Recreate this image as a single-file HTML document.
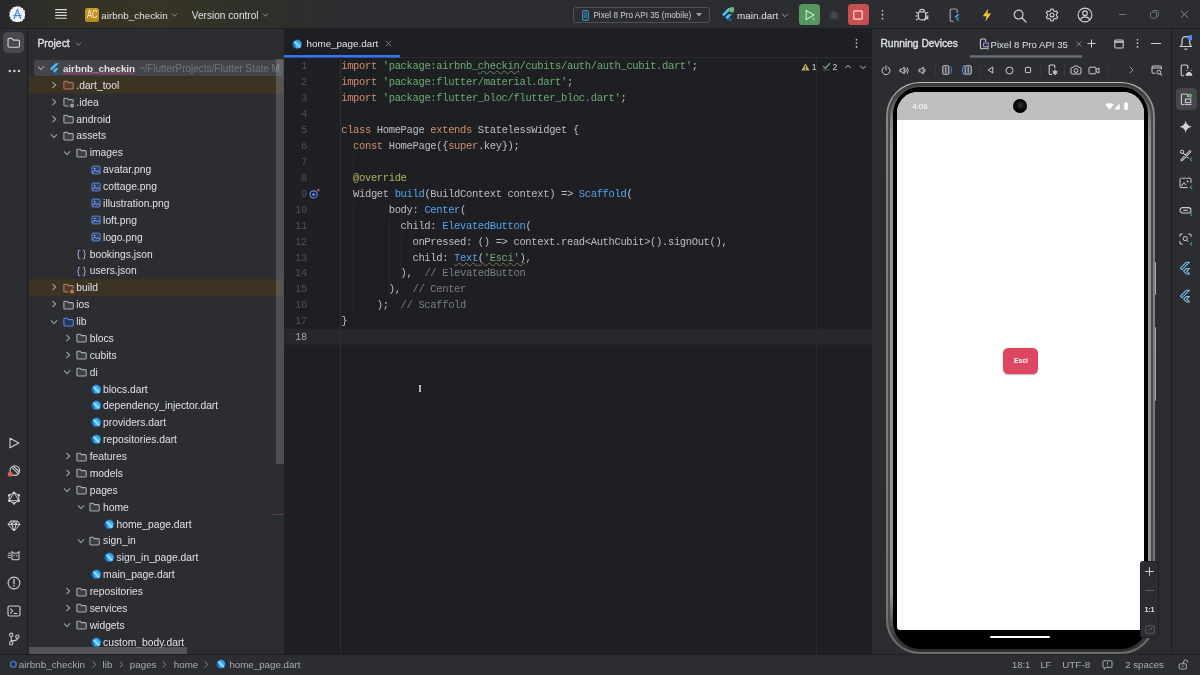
<!DOCTYPE html><html><head><meta charset="utf-8"><title>home_page.dart</title><style>
*{box-sizing:border-box;margin:0;padding:0}
html,body{width:1200px;height:675px;overflow:hidden;background:#2B2D30}
body{font-family:"Liberation Sans",sans-serif;font-size:10.6px;color:#DFE1E5;position:relative;-webkit-font-smoothing:antialiased}
#root{position:absolute;left:0;top:0;width:1200px;height:675px;overflow:hidden;will-change:transform}
i{font-style:normal}
svg{display:block}
.abs{position:absolute}
svg.abs{position:absolute}
#title{position:absolute;left:0;top:0;width:1200px;height:28.5px;background:linear-gradient(90deg,#27282B 0px,#2E2E29 40px,#363324 100px,#363424 160px,#30302A 250px,#2B2D30 350px,#2B2D30 1200px);border-bottom:1px solid #1E1F22}
#lstrip{position:absolute;left:0;top:28.5px;width:28px;height:626px;background:#2B2D30;border-right:1px solid #1E1F22}
#proj{position:absolute;left:28px;top:28.5px;width:255.5px;height:626px;background:#2B2D30;overflow:hidden}
#editor{position:absolute;left:283.5px;top:28.5px;width:588px;height:626px;background:#1E1F22;overflow:hidden}
#rpanel{position:absolute;left:871.5px;top:28.5px;width:299.5px;height:626px;background:#2B2D30;overflow:hidden}
#rstrip{position:absolute;left:1171px;top:28.5px;width:29px;height:626px;background:#2B2D30;border-left:1px solid #1E1F22}
#status{position:absolute;left:0;top:654px;width:1200px;height:21px;background:#2B2D30;border-top:1px solid #1E1F22}
.trow{position:absolute;left:6.5px;width:249px;height:16.9px;border-radius:0}
.trow.sel{}
.trow .ar{position:absolute}
.trow .ic{position:absolute;top:4.1px}
.tt{position:absolute;top:.7px;line-height:17px;white-space:pre;font-size:10.3px;color:#DFE1E5}
.tt.b{font-weight:bold;font-size:9.85px}
.tt.tp{color:#6F737A;font-size:10px}
.wavy{}
.tb{font-size:10.9px;line-height:15px;color:#DFE1E5;white-space:pre}
.hb{font-size:10.4px;line-height:14px;color:#DFE1E5;white-space:pre;-webkit-text-stroke:.35px #DFE1E5}
.code{font-family:"Liberation Mono","DejaVu Sans Mono",monospace;font-size:10.5px;letter-spacing:-.36px}
.cl{height:15.94px;line-height:15.94px;white-space:pre;color:#BCBEC4}
.ln{height:15.94px;line-height:15.94px;color:#4B5059;text-align:right}
.ln.cur{color:#A1A3AB}
.a{color:#B3AE60}.k{color:#CF8E6D}.s,.sw,.sw2{color:#6AAB73}.f,.fw{color:#57A3EC}.c{color:#7A7E85}.n,.fw2{color:#BCBEC4}
.sw{text-decoration:underline wavy #5E8A5A;text-decoration-thickness:.55px;text-underline-offset:1.2px;text-decoration-skip-ink:none}
.fw,.fw2,.sw2{text-decoration:underline wavy #7C7356;text-decoration-thickness:.55px;text-underline-offset:1.2px;text-decoration-skip-ink:none}
</style></head><body>
<div id="root">
<div id="title"><svg width="16.8" height="16.8" viewBox="0 0 18 18" style="position:absolute;left:8.6px;top:5.6px"><circle cx="9" cy="9" r="8.2" fill="#F4F6FA"/><circle cx="9" cy="9" r="8.2" fill="none" stroke="#F4F6FA" stroke-width="1.2" stroke-dasharray="2.2 1.1"/><path d="M9 3.6L5.4 13.4M9 3.6L12.6 13.4M5 10.3H13" stroke="#4A82EA" stroke-width="1.35" stroke-linecap="round" fill="none"/><circle cx="9" cy="6.8" r="1.1" fill="#F4F6FA" stroke="#4A82EA" stroke-width=".8"/></svg><svg width="12" height="10" viewBox="0 0 12 10.4" style="position:absolute;left:55.3px;top:8.9px"><path d="M0 .6H12M0 3.6H12M0 6.6H12M0 9.6H12" stroke="#D8DADF" stroke-width="1.2"/></svg><div class="abs" style="left:85.3px;top:8.3px;width:13.6px;height:13.6px;border-radius:2.6px;background:linear-gradient(180deg,#C89C2E,#B7881D);color:#FFF0C8;font-size:10.4px;line-height:14.4px;text-align:center"><span style="display:inline-block;transform:scaleX(.72)">AC</span></div><span class="abs tb" style="left:101.3px;top:7.9px;font-size:9.9px">airbnb_checkin</span><svg width="7" height="4.2" viewBox="0 0 8 5.4" style="position:absolute;left:171.4px;top:13.4px"><path d="M1 1.2L4 4.2L7 1.2" fill="none" stroke="#9DA0A8" stroke-width="1.1" stroke-linecap="round" stroke-linejoin="round"/></svg><span class="abs tb" style="left:191.8px;top:7.9px;font-size:10.1px">Version control</span><svg width="7" height="4.2" viewBox="0 0 8 5.4" style="position:absolute;left:261.6px;top:13.4px"><path d="M1 1.2L4 4.2L7 1.2" fill="none" stroke="#9DA0A8" stroke-width="1.1" stroke-linecap="round" stroke-linejoin="round"/></svg><div class="abs" style="left:572.6px;top:7px;width:137px;height:15.8px;border:1px solid #4E5157;border-radius:3px"></div><svg width="7" height="11" viewBox="0 0 7 11" style="position:absolute;left:581.6px;top:9.7px"><rect x=".7" y=".7" width="5.6" height="9.6" rx="1.3" fill="none" stroke="#3592C4" stroke-width="1.2"/><rect x="2" y="2.3" width="3" height="5.8" fill="#3592C4" opacity=".55"/></svg><span class="abs" style="left:593.4px;top:10.1px;font-size:8.2px;line-height:12px;color:#CED0D6;white-space:pre">Pixel 8 Pro API 35 (mobile)</span><svg width="6" height="4" viewBox="0 0 6 4" style="position:absolute;left:696.4px;top:13.3px"><path d="M0 0H6L3 3.6Z" fill="#9DA0A8"/></svg><svg width="13.4" height="15.6" viewBox="0 0 12 14" style="position:absolute;left:721px;top:7.2px"><path d="M6.6 1H10L2.6 8.4L0.9 6.7Z" fill="#47C5FB"/><path d="M6.6 6.4H10L7.2 9.2L10 12H6.6L3.8 9.2Z" fill="#47C5FB"/><path d="M5.5 10.9L7.2 9.2L10 12H6.6Z" fill="#0D5EA6"/><circle cx="9.7" cy="2.5" r="2.4" fill="#6DB874"/></svg><span class="abs tb" style="left:737px;top:7.9px;font-size:9.9px">main.dart</span><svg width="8" height="4.8" viewBox="0 0 8 5.4" style="position:absolute;left:781.4px;top:13.4px"><path d="M1 1.2L4 4.2L7 1.2" fill="none" stroke="#9DA0A8" stroke-width="1.1" stroke-linecap="round" stroke-linejoin="round"/></svg><div class="abs" style="left:798.8px;top:4.2px;width:21.2px;height:21.3px;border-radius:3.6px;background:#57965C"></div><svg width="12" height="12" viewBox="0 0 12 12" style="position:absolute;left:804px;top:9px"><path d="M2.2 1.4L10 6L2.2 10.6Z" fill="none" stroke="#C6EBC9" stroke-width="1.15" stroke-linejoin="round"/><circle cx="9.6" cy="10" r="1.5" fill="#7FE08C" stroke="#57965C" stroke-width=".6"/></svg><svg width="12" height="12" viewBox="0 0 12 12" style="position:absolute;left:828px;top:8.6px"><ellipse cx="6" cy="6.8" rx="3" ry="3.8" fill="#45474C"/><path d="M3.6 3.6Q6 .8 8.4 3.6M1 4.2L3 5.4M11 4.2L9 5.4M.6 7.2H3M9 7.2H11.4M1 10.4L3.1 9M11 10.4L8.9 9" stroke="#45474C" stroke-width="1" fill="none"/></svg><div class="abs" style="left:847.6px;top:4.2px;width:21.2px;height:21.3px;border-radius:3.6px;background:#C94F4F"></div><svg width="10" height="10" viewBox="0 0 10 10" style="position:absolute;left:853.2px;top:9.8px"><rect x=".8" y=".8" width="8.4" height="8.4" rx="1.2" fill="none" stroke="#FFD9D9" stroke-width="1.2"/></svg><svg width="3" height="12" viewBox="0 0 3 12" style="position:absolute;left:880.7px;top:9.4px"><rect x=".7" y=".9" width="1.6" height="1.6" rx=".55" fill="#CED0D6"/><rect x=".7" y="4.8500000000000005" width="1.6" height="1.6" rx=".55" fill="#CED0D6"/><rect x=".7" y="8.8" width="1.6" height="1.6" rx=".55" fill="#CED0D6"/></svg><svg width="14" height="14" viewBox="0 0 14 14" style="position:absolute;left:915px;top:8.4px"><path d="M4.6 3.2Q4.6 1.4 7 1.4Q9.4 1.4 9.4 3.2" fill="none" stroke="#CED0D6" stroke-width="1.1"/><path d="M3.4 5.2Q3.4 3.9 4.7 3.9H9.3Q10.6 3.9 10.6 5.2V8.6Q10.6 12 7 12Q3.4 12 3.4 8.6Z" fill="none" stroke="#CED0D6" stroke-width="1.1"/><path d="M.8 4.2L3.3 5.6M13.2 4.2L10.7 5.6M.4 8H3.2M10.8 8H13.6M1 12L3.6 10.4" stroke="#CED0D6" stroke-width="1.05" fill="none"/><path d="M9.2 12.6L12.8 9M12.8 9H10.4M12.8 9V11.4" stroke="#CED0D6" stroke-width="1.05" fill="none"/></svg><svg width="11" height="15" viewBox="0 0 11 15" style="position:absolute;left:948.6px;top:7.6px"><path d="M8.2 5V2.2Q8.2 1 7 1H2.4Q1.2 1 1.2 2.2V12.2Q1.2 13.4 2.4 13.4H4.4" fill="none" stroke="#9DA0A8" stroke-width="1.2"/><path d="M8.6 6.2H10.6L6.8 10L5.8 9Z" fill="#47C5FB"/><path d="M8.6 9.6H10.6L9 11.2L10.6 12.8H8.6L7 11.2Z" fill="#3592C4"/></svg><svg width="10" height="14" viewBox="0 0 10 14" style="position:absolute;left:981.6px;top:8.4px"><path d="M6.2 .4L.8 8.2H4.4L3.4 13.6L9.2 5.4H5.4Z" fill="#F2C037"/></svg><svg width="14" height="14" viewBox="0 0 14 14" style="position:absolute;left:1013.4px;top:8.6px"><circle cx="5.6" cy="5.6" r="4.4" fill="none" stroke="#CED0D6" stroke-width="1.2"/><path d="M8.8 8.8L13 13" stroke="#CED0D6" stroke-width="1.3" stroke-linecap="round"/></svg><svg width="14" height="14" viewBox="0 0 14 14" style="position:absolute;left:1044.8px;top:8.2px"><circle cx="7" cy="7" r="2" fill="none" stroke="#CED0D6" stroke-width="1.1"/><path d="M5.9 1H8.1L8.5 2.7L9.9 3.5L11.6 3L12.7 4.9L11.4 6.1V7.9L12.7 9.1L11.6 11L9.9 10.5L8.5 11.3L8.1 13H5.9L5.5 11.3L4.1 10.5L2.4 11L1.3 9.1L2.6 7.9V6.1L1.3 4.9L2.4 3L4.1 3.5L5.5 2.7Z" fill="none" stroke="#CED0D6" stroke-width="1.1" stroke-linejoin="round"/></svg><svg width="16" height="16" viewBox="0 0 16 16" style="position:absolute;left:1076.6px;top:7.2px"><circle cx="8" cy="8" r="6.9" fill="none" stroke="#CED0D6" stroke-width="1.15"/><circle cx="8" cy="6.2" r="2.3" fill="none" stroke="#CED0D6" stroke-width="1.15"/><path d="M3.4 12.8Q4.6 9.8 8 9.8Q11.4 9.8 12.6 12.8" fill="none" stroke="#CED0D6" stroke-width="1.15"/></svg><div class="abs" style="left:1118.6px;top:13.9px;width:7.8px;height:1px;background:#6F737A"></div><svg width="9" height="9" viewBox="0 0 9 9" style="position:absolute;left:1149.6px;top:10px"><rect x=".5" y="2.2" width="6" height="6" rx="1" fill="none" stroke="#6F737A" stroke-width="1"/><path d="M2.6 2V1.5Q2.6 .5 3.6 .5H7.4Q8.4 .5 8.4 1.5V5.4Q8.4 6.4 7.4 6.4H6.8" fill="none" stroke="#6F737A" stroke-width="1"/></svg><svg width="9" height="9" viewBox="0 0 9 9" style="position:absolute;left:1180px;top:10px"><path d="M.8 .8L8 8M8 .8L.8 8" stroke="#868A91" stroke-width="1"/></svg></div>
<div id="lstrip"><div class="abs" style="left:3.2px;top:3.4px;width:21.2px;height:21.6px;border-radius:4.5px;background:#47494E"></div><svg width="13.6" height="11.4" viewBox="0 0 12 10" style="position:absolute;left:7.1px;top:8.4px"><path d="M.9 2.2Q.9 1.2 1.9 1.2H4.3L5.7 2.7H10Q11 2.7 11 3.7V8Q11 9 10 9H1.9Q.9 9 .9 8Z" fill="none" stroke="#CED0D6" stroke-width="1" stroke-linejoin="round"/></svg><svg width="13" height="4" viewBox="0 0 13 4" style="position:absolute;left:7.6px;top:40.6px"><circle cx="1.8" cy="2" r="1.2" fill="#CED0D6"/><circle cx="6.4" cy="2" r="1.2" fill="#CED0D6"/><circle cx="11" cy="2" r="1.2" fill="#CED0D6"/></svg><svg width="12" height="12" viewBox="0 0 12 12" style="position:absolute;left:7.90px;top:408.20px"><path d="M2 1.2L10.8 6L2 10.8Z" fill="none" stroke="#CED0D6" stroke-width="1.1" stroke-linejoin="round"/></svg><svg width="14" height="14" viewBox="0 0 14 14" style="position:absolute;left:6.60px;top:435.50px"><circle cx="7.8" cy="6.6" r="4.8" fill="none" stroke="#CED0D6" stroke-width="1.1"/><path d="M4.6 3.2L11.2 9.6M6.4 2.2L12.4 8" stroke="#CED0D6" stroke-width="1.1"/><circle cx="3.2" cy="10.2" r="2.5" fill="#DB5C5C"/></svg><svg width="14" height="14" viewBox="0 0 14 14" style="position:absolute;left:6.90px;top:462.80px"><path d="M7 1.6L11.8 4.3V9.7L7 12.4L2.2 9.7V4.3Z M7 1.6L2.2 9.7H11.8Z" fill="none" stroke="#CED0D6" stroke-width="1" stroke-linejoin="round"/><circle cx="7" cy="1.6" r="1.2" fill="#CED0D6"/><circle cx="11.8" cy="4.3" r="1.2" fill="#CED0D6"/><circle cx="11.8" cy="9.7" r="1.2" fill="#CED0D6"/><circle cx="7" cy="12.4" r="1.2" fill="#CED0D6"/><circle cx="2.2" cy="9.7" r="1.2" fill="#CED0D6"/><circle cx="2.2" cy="4.3" r="1.2" fill="#CED0D6"/></svg><svg width="14" height="12" viewBox="0 0 14 12" style="position:absolute;left:6.90px;top:491.90px"><path d="M3.6 1H10.4L13 4.4L7 11L1 4.4Z M1 4.4H13 M4.8 4.4L7 11L9.2 4.4 M3.6 1L4.8 4.4L7 1L9.2 4.4L10.4 1" fill="none" stroke="#CED0D6" stroke-width="1" stroke-linejoin="round"/></svg><svg width="14" height="12" viewBox="0 0 14 12" style="position:absolute;left:6.70px;top:520.70px"><path d="M5 9.8V2.6L6.8 4.2H10.2L12 2.6V9.8Q12 10.8 11 10.8H6Q5 10.8 5 9.8Z" fill="none" stroke="#CED0D6" stroke-width="1.05" stroke-linejoin="round"/><path d="M1.2 4.2H3.8M.6 6.4H3.8M1.2 8.6H3.8" stroke="#CED0D6" stroke-width="1"/><circle cx="7.2" cy="6.8" r=".7" fill="#CED0D6"/><circle cx="9.8" cy="6.8" r=".7" fill="#CED0D6"/></svg><svg width="14" height="14" viewBox="0 0 14 14" style="position:absolute;left:6.90px;top:547.40px"><circle cx="7" cy="7" r="5.9" fill="none" stroke="#CED0D6" stroke-width="1.1"/><path d="M7 3.6V7.8" stroke="#CED0D6" stroke-width="1.3" stroke-linecap="round"/><circle cx="7" cy="10" r=".8" fill="#CED0D6"/></svg><svg width="14" height="12" viewBox="0 0 14 12" style="position:absolute;left:6.90px;top:576.50px"><rect x="1" y="1" width="12" height="10" rx="1.6" fill="none" stroke="#CED0D6" stroke-width="1.1"/><path d="M3.6 3.8L5.8 6L3.6 8.2M7 8.4H10" stroke="#CED0D6" stroke-width="1.05" fill="none" stroke-linecap="round" stroke-linejoin="round"/></svg><svg width="12" height="14" viewBox="0 0 12 14" style="position:absolute;left:7.70px;top:603.50px"><circle cx="3.2" cy="2.8" r="1.7" fill="none" stroke="#CED0D6" stroke-width="1.05"/><circle cx="9.4" cy="4.6" r="1.7" fill="none" stroke="#CED0D6" stroke-width="1.05"/><circle cx="3.2" cy="11.2" r="1.7" fill="none" stroke="#CED0D6" stroke-width="1.05"/><path d="M3.2 4.5V9.5M9.4 6.3Q9.4 8.6 6.4 8.6Q3.4 8.6 3.2 9.5" fill="none" stroke="#CED0D6" stroke-width="1.05"/></svg></div>
<div id="proj"><span class="abs hb" style="left:9.4px;top:8.2px">Project</span><svg width="7" height="4.2" viewBox="0 0 8 5.4" style="position:absolute;left:47.4px;top:13.2px"><path d="M1 1.2L4 4.2L7 1.2" fill="none" stroke="#9DA0A8" stroke-width="1.1" stroke-linecap="round" stroke-linejoin="round"/></svg><div class="abs" style="left:6.40px;top:31.50px;width:249.10px;height:16px;background:#43454A;border-radius:3px 0 0 3px"></div><div class="abs" style="left:6.40px;top:30.50px;width:249.10px;height:1px;background:#43454A;opacity:0.10"></div><div class="abs" style="left:6.40px;top:47.50px;width:249.10px;height:1px;background:#43454A;opacity:0.10"></div><div class="trow sel" style="top:30.800px;"><i class="ar" style="left:2.10px;top:6.1px"><svg width="8" height="6" viewBox="0 0 8 6" ><path d="M1.2 1.6L4 4.6L6.8 1.6" fill="none" stroke="#9DA0A8" stroke-width="1.05" stroke-linecap="round" stroke-linejoin="round"/></svg></i><i class="ic" style="left:14.70px"><svg width="11" height="11" viewBox="0 0 9.5 10.4" ><path d="M5.8 0.3H8.9L2.1 7.1L0.55 5.55Z" fill="#47C5FB"/><path d="M5.8 4.9H8.9L6.3 7.5L8.9 10.1H5.8L3.2 7.5Z" fill="#47C5FB"/><path d="M4.75 9.05L6.3 7.5L8.9 10.1H5.8Z" fill="#00569E"/></svg></i><span class="tt wavy b" style="left:28.40px">airbnb_checkin</span><svg class="abs" style="left:28.40px;top:13.2px" width="71.4" height="2.4" viewBox="0 0 71.4 2.4"><path d="M0 1.5L1.2 .8L2.4 1.5L3.6 .8L4.8 1.5L6.0 .8L7.2 1.5L8.4 .8L9.6 1.5L10.8 .8L12.0 1.5L13.2 .8L14.4 1.5L15.6 .8L16.8 1.5L18.0 .8L19.2 1.5L20.4 .8L21.6 1.5L22.8 .8L24.0 1.5L25.2 .8L26.4 1.5L27.6 .8L28.8 1.5L30.0 .8L31.2 1.5L32.4 .8L33.6 1.5L34.8 .8L36.0 1.5L37.2 .8L38.4 1.5L39.6 .8L40.8 1.5L42.0 .8L43.2 1.5L44.4 .8L45.6 1.5L46.8 .8L48.0 1.5L49.2 .8L50.4 1.5L51.6 .8L52.8 1.5L54.0 .8L55.2 1.5L56.4 .8L57.6 1.5L58.8 .8L60.0 1.5L61.2 .8L62.4 1.5L63.6 .8L64.8 1.5L66.0 .8L67.2 1.5L68.4 .8L69.6 1.5L70.8 .8L72.0 1.5" fill="none" stroke="#AE4560" stroke-width="1.15"/></svg><span class="tt tp" style="left:104.00px">~/FlutterProjects/Flutter State M</span></div>
<div class="abs" style="left:0.60px;top:48.50px;width:254.90px;height:16px;background:#3C3323;"></div><div class="abs" style="left:0.60px;top:47.50px;width:254.90px;height:1px;background:#3C3323;opacity:0.33"></div><div class="abs" style="left:0.60px;top:64.50px;width:254.90px;height:1px;background:#3C3323;opacity:0.55"></div><div class="trow" style="top:47.675px;"><i class="ar" style="left:16.70px;top:4.6px"><svg width="6" height="8" viewBox="0 0 6 8" ><path d="M1.6 1.2L4.6 4L1.6 6.8" fill="none" stroke="#9DA0A8" stroke-width="1.05" stroke-linecap="round" stroke-linejoin="round"/></svg></i><i class="ic" style="left:28.10px"><svg width="11" height="10" viewBox="0 0 11 10" ><path d="M0.9 2.2 Q0.9 1.2 1.9 1.2 H4.1 L5.4 2.6 H9.2 Q10.2 2.6 10.2 3.6 V7.9 Q10.2 8.9 9.2 8.9 H1.9 Q0.9 8.9 0.9 7.9 Z" fill="#54392C" stroke="#B67C5E" stroke-width="1.05" stroke-linejoin="round"/></svg></i><span class="tt" style="left:41.80px">.dart_tool</span></div>
<div class="trow" style="top:64.550px;"><i class="ar" style="left:16.70px;top:4.6px"><svg width="6" height="8" viewBox="0 0 6 8" ><path d="M1.6 1.2L4.6 4L1.6 6.8" fill="none" stroke="#9DA0A8" stroke-width="1.05" stroke-linecap="round" stroke-linejoin="round"/></svg></i><i class="ic" style="left:28.10px"><svg width="12" height="12" viewBox="0 0 12 12" ><path d="M0.9 2.2 Q0.9 1.2 1.9 1.2 H4.1 L5.4 2.6 H9.2 Q10.2 2.6 10.2 3.6 V7.9 Q10.2 8.9 9.2 8.9 H1.9 Q0.9 8.9 0.9 7.9 Z" fill="#393B40" stroke="#A4A7AE" stroke-width="1.05" stroke-linejoin="round"/><circle cx="9" cy="8.6" r="3.1" fill="#2B2D30"/><circle cx="9" cy="8.6" r="1.25" fill="none" stroke="#A4A7AE" stroke-width=".95"/><path d="M9 6.1V11.1M6.85 7.35L11.15 9.85M6.85 9.85L11.15 7.35" stroke="#A4A7AE" stroke-width=".85"/></svg></i><span class="tt" style="left:41.80px">.idea</span></div>
<div class="trow" style="top:81.425px;"><i class="ar" style="left:16.70px;top:4.6px"><svg width="6" height="8" viewBox="0 0 6 8" ><path d="M1.6 1.2L4.6 4L1.6 6.8" fill="none" stroke="#9DA0A8" stroke-width="1.05" stroke-linecap="round" stroke-linejoin="round"/></svg></i><i class="ic" style="left:28.10px"><svg width="11" height="10" viewBox="0 0 11 10" ><path d="M0.9 2.2 Q0.9 1.2 1.9 1.2 H4.1 L5.4 2.6 H9.2 Q10.2 2.6 10.2 3.6 V7.9 Q10.2 8.9 9.2 8.9 H1.9 Q0.9 8.9 0.9 7.9 Z" fill="#3C3E43" stroke="#ABAEB5" stroke-width="1.05" stroke-linejoin="round"/></svg></i><span class="tt" style="left:41.80px">android</span></div>
<div class="trow" style="top:98.300px;"><i class="ar" style="left:15.50px;top:6.1px"><svg width="8" height="6" viewBox="0 0 8 6" ><path d="M1.2 1.6L4 4.6L6.8 1.6" fill="none" stroke="#9DA0A8" stroke-width="1.05" stroke-linecap="round" stroke-linejoin="round"/></svg></i><i class="ic" style="left:28.10px"><svg width="11" height="10" viewBox="0 0 11 10" ><path d="M0.9 2.2 Q0.9 1.2 1.9 1.2 H4.1 L5.4 2.6 H9.2 Q10.2 2.6 10.2 3.6 V7.9 Q10.2 8.9 9.2 8.9 H1.9 Q0.9 8.9 0.9 7.9 Z" fill="#3C3E43" stroke="#ABAEB5" stroke-width="1.05" stroke-linejoin="round"/></svg></i><span class="tt" style="left:41.80px">assets</span></div>
<div class="trow" style="top:115.175px;"><i class="ar" style="left:28.90px;top:6.1px"><svg width="8" height="6" viewBox="0 0 8 6" ><path d="M1.2 1.6L4 4.6L6.8 1.6" fill="none" stroke="#9DA0A8" stroke-width="1.05" stroke-linecap="round" stroke-linejoin="round"/></svg></i><i class="ic" style="left:41.50px"><svg width="11" height="10" viewBox="0 0 11 10" ><path d="M0.9 2.2 Q0.9 1.2 1.9 1.2 H4.1 L5.4 2.6 H9.2 Q10.2 2.6 10.2 3.6 V7.9 Q10.2 8.9 9.2 8.9 H1.9 Q0.9 8.9 0.9 7.9 Z" fill="#3C3E43" stroke="#ABAEB5" stroke-width="1.05" stroke-linejoin="round"/></svg></i><span class="tt" style="left:55.20px">images</span></div>
<div class="trow" style="top:132.050px;"><i class="ic" style="left:56.10px"><svg width="10" height="10" viewBox="0 0 11 11" ><rect x="1" y="1.2" width="9" height="8.6" rx="1.2" fill="#2C3F6B" stroke="#5A8AEA" stroke-width="1"/><path d="M1.5 8.5L4.3 5.6L6 7.3L7.4 6L9.6 8.2" fill="none" stroke="#9DBDFA" stroke-width="1"/><circle cx="4" cy="3.8" r=".9" fill="#9DBDFA"/></svg></i><span class="tt" style="left:68.60px">avatar.png</span></div>
<div class="trow" style="top:148.925px;"><i class="ic" style="left:56.10px"><svg width="10" height="10" viewBox="0 0 11 11" ><rect x="1" y="1.2" width="9" height="8.6" rx="1.2" fill="#2C3F6B" stroke="#5A8AEA" stroke-width="1"/><path d="M1.5 8.5L4.3 5.6L6 7.3L7.4 6L9.6 8.2" fill="none" stroke="#9DBDFA" stroke-width="1"/><circle cx="4" cy="3.8" r=".9" fill="#9DBDFA"/></svg></i><span class="tt" style="left:68.60px">cottage.png</span></div>
<div class="trow" style="top:165.800px;"><i class="ic" style="left:56.10px"><svg width="10" height="10" viewBox="0 0 11 11" ><rect x="1" y="1.2" width="9" height="8.6" rx="1.2" fill="#2C3F6B" stroke="#5A8AEA" stroke-width="1"/><path d="M1.5 8.5L4.3 5.6L6 7.3L7.4 6L9.6 8.2" fill="none" stroke="#9DBDFA" stroke-width="1"/><circle cx="4" cy="3.8" r=".9" fill="#9DBDFA"/></svg></i><span class="tt" style="left:68.60px">illustration.png</span></div>
<div class="trow" style="top:182.675px;"><i class="ic" style="left:56.10px"><svg width="10" height="10" viewBox="0 0 11 11" ><rect x="1" y="1.2" width="9" height="8.6" rx="1.2" fill="#2C3F6B" stroke="#5A8AEA" stroke-width="1"/><path d="M1.5 8.5L4.3 5.6L6 7.3L7.4 6L9.6 8.2" fill="none" stroke="#9DBDFA" stroke-width="1"/><circle cx="4" cy="3.8" r=".9" fill="#9DBDFA"/></svg></i><span class="tt" style="left:68.60px">loft.png</span></div>
<div class="trow" style="top:199.550px;"><i class="ic" style="left:56.10px"><svg width="10" height="10" viewBox="0 0 11 11" ><rect x="1" y="1.2" width="9" height="8.6" rx="1.2" fill="#2C3F6B" stroke="#5A8AEA" stroke-width="1"/><path d="M1.5 8.5L4.3 5.6L6 7.3L7.4 6L9.6 8.2" fill="none" stroke="#9DBDFA" stroke-width="1"/><circle cx="4" cy="3.8" r=".9" fill="#9DBDFA"/></svg></i><span class="tt" style="left:68.60px">logo.png</span></div>
<div class="trow" style="top:216.425px;"><i class="ic" style="left:41.50px"><svg width="11" height="11" viewBox="0 0 11 11" ><path d="M3.8 1.2Q2.4 1.2 2.4 2.6V4.2Q2.4 5.4 1.2 5.5Q2.4 5.6 2.4 6.8V8.4Q2.4 9.8 3.8 9.8M7.2 1.2Q8.6 1.2 8.6 2.6V4.2Q8.6 5.4 9.8 5.5Q8.6 5.6 8.6 6.8V8.4Q8.6 9.8 7.2 9.8" fill="none" stroke="#A39AD6" stroke-width="1.05" stroke-linecap="round"/></svg></i><span class="tt" style="left:55.20px">bookings.json</span></div>
<div class="trow" style="top:233.300px;"><i class="ic" style="left:41.50px"><svg width="11" height="11" viewBox="0 0 11 11" ><path d="M3.8 1.2Q2.4 1.2 2.4 2.6V4.2Q2.4 5.4 1.2 5.5Q2.4 5.6 2.4 6.8V8.4Q2.4 9.8 3.8 9.8M7.2 1.2Q8.6 1.2 8.6 2.6V4.2Q8.6 5.4 9.8 5.5Q8.6 5.6 8.6 6.8V8.4Q8.6 9.8 7.2 9.8" fill="none" stroke="#A39AD6" stroke-width="1.05" stroke-linecap="round"/></svg></i><span class="tt" style="left:55.20px">users.json</span></div>
<div class="abs" style="left:0.60px;top:251.50px;width:254.90px;height:16px;background:#3C3323;"></div><div class="abs" style="left:0.60px;top:250.50px;width:254.90px;height:1px;background:#3C3323;opacity:0.82"></div><div class="trow" style="top:250.175px;"><i class="ar" style="left:16.70px;top:4.6px"><svg width="6" height="8" viewBox="0 0 6 8" ><path d="M1.6 1.2L4.6 4L1.6 6.8" fill="none" stroke="#9DA0A8" stroke-width="1.05" stroke-linecap="round" stroke-linejoin="round"/></svg></i><i class="ic" style="left:28.10px"><svg width="12" height="12" viewBox="0 0 12 12" ><path d="M0.9 2.2 Q0.9 1.2 1.9 1.2 H4.1 L5.4 2.6 H9.2 Q10.2 2.6 10.2 3.6 V7.9 Q10.2 8.9 9.2 8.9 H1.9 Q0.9 8.9 0.9 7.9 Z" fill="#54392C" stroke="#BA805F" stroke-width="1.05" stroke-linejoin="round"/><circle cx="9" cy="8.6" r="3.1" fill="#3C3323"/><circle cx="9" cy="8.6" r="1.25" fill="none" stroke="#BA805F" stroke-width=".95"/><path d="M9 6.1V11.1M6.85 7.35L11.15 9.85M6.85 9.85L11.15 7.35" stroke="#BA805F" stroke-width=".85"/></svg></i><span class="tt" style="left:41.80px">build</span></div>
<div class="trow" style="top:267.050px;"><i class="ar" style="left:16.70px;top:4.6px"><svg width="6" height="8" viewBox="0 0 6 8" ><path d="M1.6 1.2L4.6 4L1.6 6.8" fill="none" stroke="#9DA0A8" stroke-width="1.05" stroke-linecap="round" stroke-linejoin="round"/></svg></i><i class="ic" style="left:28.10px"><svg width="11" height="10" viewBox="0 0 11 10" ><path d="M0.9 2.2 Q0.9 1.2 1.9 1.2 H4.1 L5.4 2.6 H9.2 Q10.2 2.6 10.2 3.6 V7.9 Q10.2 8.9 9.2 8.9 H1.9 Q0.9 8.9 0.9 7.9 Z" fill="#3C3E43" stroke="#ABAEB5" stroke-width="1.05" stroke-linejoin="round"/></svg></i><span class="tt" style="left:41.80px">ios</span></div>
<div class="trow" style="top:283.925px;"><i class="ar" style="left:15.50px;top:6.1px"><svg width="8" height="6" viewBox="0 0 8 6" ><path d="M1.2 1.6L4 4.6L6.8 1.6" fill="none" stroke="#9DA0A8" stroke-width="1.05" stroke-linecap="round" stroke-linejoin="round"/></svg></i><i class="ic" style="left:28.10px"><svg width="11" height="10" viewBox="0 0 11 10" ><path d="M0.9 2.2 Q0.9 1.2 1.9 1.2 H4.1 L5.4 2.6 H9.2 Q10.2 2.6 10.2 3.6 V7.9 Q10.2 8.9 9.2 8.9 H1.9 Q0.9 8.9 0.9 7.9 Z" fill="#24355E" stroke="#5C84DC" stroke-width="1.05" stroke-linejoin="round"/></svg></i><span class="tt" style="left:41.80px">lib</span></div>
<div class="trow" style="top:300.800px;"><i class="ar" style="left:30.10px;top:4.6px"><svg width="6" height="8" viewBox="0 0 6 8" ><path d="M1.6 1.2L4.6 4L1.6 6.8" fill="none" stroke="#9DA0A8" stroke-width="1.05" stroke-linecap="round" stroke-linejoin="round"/></svg></i><i class="ic" style="left:41.50px"><svg width="11" height="10" viewBox="0 0 11 10" ><path d="M0.9 2.2 Q0.9 1.2 1.9 1.2 H4.1 L5.4 2.6 H9.2 Q10.2 2.6 10.2 3.6 V7.9 Q10.2 8.9 9.2 8.9 H1.9 Q0.9 8.9 0.9 7.9 Z" fill="#3C3E43" stroke="#ABAEB5" stroke-width="1.05" stroke-linejoin="round"/></svg></i><span class="tt" style="left:55.20px">blocs</span></div>
<div class="trow" style="top:317.675px;"><i class="ar" style="left:30.10px;top:4.6px"><svg width="6" height="8" viewBox="0 0 6 8" ><path d="M1.6 1.2L4.6 4L1.6 6.8" fill="none" stroke="#9DA0A8" stroke-width="1.05" stroke-linecap="round" stroke-linejoin="round"/></svg></i><i class="ic" style="left:41.50px"><svg width="11" height="10" viewBox="0 0 11 10" ><path d="M0.9 2.2 Q0.9 1.2 1.9 1.2 H4.1 L5.4 2.6 H9.2 Q10.2 2.6 10.2 3.6 V7.9 Q10.2 8.9 9.2 8.9 H1.9 Q0.9 8.9 0.9 7.9 Z" fill="#3C3E43" stroke="#ABAEB5" stroke-width="1.05" stroke-linejoin="round"/></svg></i><span class="tt" style="left:55.20px">cubits</span></div>
<div class="trow" style="top:334.550px;"><i class="ar" style="left:28.90px;top:6.1px"><svg width="8" height="6" viewBox="0 0 8 6" ><path d="M1.2 1.6L4 4.6L6.8 1.6" fill="none" stroke="#9DA0A8" stroke-width="1.05" stroke-linecap="round" stroke-linejoin="round"/></svg></i><i class="ic" style="left:41.50px"><svg width="11" height="10" viewBox="0 0 11 10" ><path d="M0.9 2.2 Q0.9 1.2 1.9 1.2 H4.1 L5.4 2.6 H9.2 Q10.2 2.6 10.2 3.6 V7.9 Q10.2 8.9 9.2 8.9 H1.9 Q0.9 8.9 0.9 7.9 Z" fill="#3C3E43" stroke="#ABAEB5" stroke-width="1.05" stroke-linejoin="round"/></svg></i><span class="tt" style="left:55.20px">di</span></div>
<div class="trow" style="top:351.425px;"><i class="ic" style="left:56.30px"><svg width="10.6" height="10.6" viewBox="0 0 11 11" style="margin-top:-.5px"><circle cx="5.5" cy="5.5" r="5" fill="#1A70C0"/><path d="M2 3.4L5.6 1.2L9.8 4.6L9 9L4.4 9.4Z" fill="#46B8F2"/><path d="M2.6 2.8L8.6 8.8" stroke="#A9E2FC" stroke-width="1.5"/><path d="M6.6 1.2A4.6 4.6 0 0 1 9.9 5.4L6.4 2.2Z" fill="#2C8FDD"/></svg></i><span class="tt" style="left:68.60px">blocs.dart</span></div>
<div class="trow" style="top:368.300px;"><i class="ic" style="left:56.30px"><svg width="10.6" height="10.6" viewBox="0 0 11 11" style="margin-top:-.5px"><circle cx="5.5" cy="5.5" r="5" fill="#1A70C0"/><path d="M2 3.4L5.6 1.2L9.8 4.6L9 9L4.4 9.4Z" fill="#46B8F2"/><path d="M2.6 2.8L8.6 8.8" stroke="#A9E2FC" stroke-width="1.5"/><path d="M6.6 1.2A4.6 4.6 0 0 1 9.9 5.4L6.4 2.2Z" fill="#2C8FDD"/></svg></i><span class="tt" style="left:68.60px">dependency_injector.dart</span></div>
<div class="trow" style="top:385.175px;"><i class="ic" style="left:56.30px"><svg width="10.6" height="10.6" viewBox="0 0 11 11" style="margin-top:-.5px"><circle cx="5.5" cy="5.5" r="5" fill="#1A70C0"/><path d="M2 3.4L5.6 1.2L9.8 4.6L9 9L4.4 9.4Z" fill="#46B8F2"/><path d="M2.6 2.8L8.6 8.8" stroke="#A9E2FC" stroke-width="1.5"/><path d="M6.6 1.2A4.6 4.6 0 0 1 9.9 5.4L6.4 2.2Z" fill="#2C8FDD"/></svg></i><span class="tt" style="left:68.60px">providers.dart</span></div>
<div class="trow" style="top:402.050px;"><i class="ic" style="left:56.30px"><svg width="10.6" height="10.6" viewBox="0 0 11 11" style="margin-top:-.5px"><circle cx="5.5" cy="5.5" r="5" fill="#1A70C0"/><path d="M2 3.4L5.6 1.2L9.8 4.6L9 9L4.4 9.4Z" fill="#46B8F2"/><path d="M2.6 2.8L8.6 8.8" stroke="#A9E2FC" stroke-width="1.5"/><path d="M6.6 1.2A4.6 4.6 0 0 1 9.9 5.4L6.4 2.2Z" fill="#2C8FDD"/></svg></i><span class="tt" style="left:68.60px">repositories.dart</span></div>
<div class="trow" style="top:418.925px;"><i class="ar" style="left:30.10px;top:4.6px"><svg width="6" height="8" viewBox="0 0 6 8" ><path d="M1.6 1.2L4.6 4L1.6 6.8" fill="none" stroke="#9DA0A8" stroke-width="1.05" stroke-linecap="round" stroke-linejoin="round"/></svg></i><i class="ic" style="left:41.50px"><svg width="11" height="10" viewBox="0 0 11 10" ><path d="M0.9 2.2 Q0.9 1.2 1.9 1.2 H4.1 L5.4 2.6 H9.2 Q10.2 2.6 10.2 3.6 V7.9 Q10.2 8.9 9.2 8.9 H1.9 Q0.9 8.9 0.9 7.9 Z" fill="#3C3E43" stroke="#ABAEB5" stroke-width="1.05" stroke-linejoin="round"/></svg></i><span class="tt" style="left:55.20px">features</span></div>
<div class="trow" style="top:435.800px;"><i class="ar" style="left:30.10px;top:4.6px"><svg width="6" height="8" viewBox="0 0 6 8" ><path d="M1.6 1.2L4.6 4L1.6 6.8" fill="none" stroke="#9DA0A8" stroke-width="1.05" stroke-linecap="round" stroke-linejoin="round"/></svg></i><i class="ic" style="left:41.50px"><svg width="11" height="10" viewBox="0 0 11 10" ><path d="M0.9 2.2 Q0.9 1.2 1.9 1.2 H4.1 L5.4 2.6 H9.2 Q10.2 2.6 10.2 3.6 V7.9 Q10.2 8.9 9.2 8.9 H1.9 Q0.9 8.9 0.9 7.9 Z" fill="#3C3E43" stroke="#ABAEB5" stroke-width="1.05" stroke-linejoin="round"/></svg></i><span class="tt" style="left:55.20px">models</span></div>
<div class="trow" style="top:452.675px;"><i class="ar" style="left:28.90px;top:6.1px"><svg width="8" height="6" viewBox="0 0 8 6" ><path d="M1.2 1.6L4 4.6L6.8 1.6" fill="none" stroke="#9DA0A8" stroke-width="1.05" stroke-linecap="round" stroke-linejoin="round"/></svg></i><i class="ic" style="left:41.50px"><svg width="11" height="10" viewBox="0 0 11 10" ><path d="M0.9 2.2 Q0.9 1.2 1.9 1.2 H4.1 L5.4 2.6 H9.2 Q10.2 2.6 10.2 3.6 V7.9 Q10.2 8.9 9.2 8.9 H1.9 Q0.9 8.9 0.9 7.9 Z" fill="#3C3E43" stroke="#ABAEB5" stroke-width="1.05" stroke-linejoin="round"/></svg></i><span class="tt" style="left:55.20px">pages</span></div>
<div class="trow" style="top:469.550px;"><i class="ar" style="left:42.30px;top:6.1px"><svg width="8" height="6" viewBox="0 0 8 6" ><path d="M1.2 1.6L4 4.6L6.8 1.6" fill="none" stroke="#9DA0A8" stroke-width="1.05" stroke-linecap="round" stroke-linejoin="round"/></svg></i><i class="ic" style="left:54.90px"><svg width="11" height="10" viewBox="0 0 11 10" ><path d="M0.9 2.2 Q0.9 1.2 1.9 1.2 H4.1 L5.4 2.6 H9.2 Q10.2 2.6 10.2 3.6 V7.9 Q10.2 8.9 9.2 8.9 H1.9 Q0.9 8.9 0.9 7.9 Z" fill="#3C3E43" stroke="#ABAEB5" stroke-width="1.05" stroke-linejoin="round"/></svg></i><span class="tt" style="left:68.60px">home</span></div>
<div class="trow" style="top:486.425px;"><i class="ic" style="left:69.70px"><svg width="10.6" height="10.6" viewBox="0 0 11 11" style="margin-top:-.5px"><circle cx="5.5" cy="5.5" r="5" fill="#1A70C0"/><path d="M2 3.4L5.6 1.2L9.8 4.6L9 9L4.4 9.4Z" fill="#46B8F2"/><path d="M2.6 2.8L8.6 8.8" stroke="#A9E2FC" stroke-width="1.5"/><path d="M6.6 1.2A4.6 4.6 0 0 1 9.9 5.4L6.4 2.2Z" fill="#2C8FDD"/></svg></i><span class="tt" style="left:82.00px">home_page.dart</span></div>
<div class="trow" style="top:503.300px;"><i class="ar" style="left:42.30px;top:6.1px"><svg width="8" height="6" viewBox="0 0 8 6" ><path d="M1.2 1.6L4 4.6L6.8 1.6" fill="none" stroke="#9DA0A8" stroke-width="1.05" stroke-linecap="round" stroke-linejoin="round"/></svg></i><i class="ic" style="left:54.90px"><svg width="11" height="10" viewBox="0 0 11 10" ><path d="M0.9 2.2 Q0.9 1.2 1.9 1.2 H4.1 L5.4 2.6 H9.2 Q10.2 2.6 10.2 3.6 V7.9 Q10.2 8.9 9.2 8.9 H1.9 Q0.9 8.9 0.9 7.9 Z" fill="#3C3E43" stroke="#ABAEB5" stroke-width="1.05" stroke-linejoin="round"/></svg></i><span class="tt" style="left:68.60px">sign_in</span></div>
<div class="trow" style="top:520.175px;"><i class="ic" style="left:69.70px"><svg width="10.6" height="10.6" viewBox="0 0 11 11" style="margin-top:-.5px"><circle cx="5.5" cy="5.5" r="5" fill="#1A70C0"/><path d="M2 3.4L5.6 1.2L9.8 4.6L9 9L4.4 9.4Z" fill="#46B8F2"/><path d="M2.6 2.8L8.6 8.8" stroke="#A9E2FC" stroke-width="1.5"/><path d="M6.6 1.2A4.6 4.6 0 0 1 9.9 5.4L6.4 2.2Z" fill="#2C8FDD"/></svg></i><span class="tt" style="left:82.00px">sign_in_page.dart</span></div>
<div class="trow" style="top:537.050px;"><i class="ic" style="left:56.30px"><svg width="10.6" height="10.6" viewBox="0 0 11 11" style="margin-top:-.5px"><circle cx="5.5" cy="5.5" r="5" fill="#1A70C0"/><path d="M2 3.4L5.6 1.2L9.8 4.6L9 9L4.4 9.4Z" fill="#46B8F2"/><path d="M2.6 2.8L8.6 8.8" stroke="#A9E2FC" stroke-width="1.5"/><path d="M6.6 1.2A4.6 4.6 0 0 1 9.9 5.4L6.4 2.2Z" fill="#2C8FDD"/></svg></i><span class="tt" style="left:68.60px">main_page.dart</span></div>
<div class="trow" style="top:553.925px;"><i class="ar" style="left:30.10px;top:4.6px"><svg width="6" height="8" viewBox="0 0 6 8" ><path d="M1.6 1.2L4.6 4L1.6 6.8" fill="none" stroke="#9DA0A8" stroke-width="1.05" stroke-linecap="round" stroke-linejoin="round"/></svg></i><i class="ic" style="left:41.50px"><svg width="11" height="10" viewBox="0 0 11 10" ><path d="M0.9 2.2 Q0.9 1.2 1.9 1.2 H4.1 L5.4 2.6 H9.2 Q10.2 2.6 10.2 3.6 V7.9 Q10.2 8.9 9.2 8.9 H1.9 Q0.9 8.9 0.9 7.9 Z" fill="#3C3E43" stroke="#ABAEB5" stroke-width="1.05" stroke-linejoin="round"/></svg></i><span class="tt" style="left:55.20px">repositories</span></div>
<div class="trow" style="top:570.800px;"><i class="ar" style="left:30.10px;top:4.6px"><svg width="6" height="8" viewBox="0 0 6 8" ><path d="M1.6 1.2L4.6 4L1.6 6.8" fill="none" stroke="#9DA0A8" stroke-width="1.05" stroke-linecap="round" stroke-linejoin="round"/></svg></i><i class="ic" style="left:41.50px"><svg width="11" height="10" viewBox="0 0 11 10" ><path d="M0.9 2.2 Q0.9 1.2 1.9 1.2 H4.1 L5.4 2.6 H9.2 Q10.2 2.6 10.2 3.6 V7.9 Q10.2 8.9 9.2 8.9 H1.9 Q0.9 8.9 0.9 7.9 Z" fill="#3C3E43" stroke="#ABAEB5" stroke-width="1.05" stroke-linejoin="round"/></svg></i><span class="tt" style="left:55.20px">services</span></div>
<div class="trow" style="top:587.675px;"><i class="ar" style="left:28.90px;top:6.1px"><svg width="8" height="6" viewBox="0 0 8 6" ><path d="M1.2 1.6L4 4.6L6.8 1.6" fill="none" stroke="#9DA0A8" stroke-width="1.05" stroke-linecap="round" stroke-linejoin="round"/></svg></i><i class="ic" style="left:41.50px"><svg width="11" height="10" viewBox="0 0 11 10" ><path d="M0.9 2.2 Q0.9 1.2 1.9 1.2 H4.1 L5.4 2.6 H9.2 Q10.2 2.6 10.2 3.6 V7.9 Q10.2 8.9 9.2 8.9 H1.9 Q0.9 8.9 0.9 7.9 Z" fill="#3C3E43" stroke="#ABAEB5" stroke-width="1.05" stroke-linejoin="round"/></svg></i><span class="tt" style="left:55.20px">widgets</span></div>
<div class="trow" style="top:604.550px;"><i class="ic" style="left:56.30px"><svg width="10.6" height="10.6" viewBox="0 0 11 11" style="margin-top:-.5px"><circle cx="5.5" cy="5.5" r="5" fill="#1A70C0"/><path d="M2 3.4L5.6 1.2L9.8 4.6L9 9L4.4 9.4Z" fill="#46B8F2"/><path d="M2.6 2.8L8.6 8.8" stroke="#A9E2FC" stroke-width="1.5"/><path d="M6.6 1.2A4.6 4.6 0 0 1 9.9 5.4L6.4 2.2Z" fill="#2C8FDD"/></svg></i><span class="tt" style="left:68.60px">custom_body.dart</span></div><div class="abs" style="left:245px;top:485.6px;width:11px;height:1.2px;background:#6B3B45"></div><div class="abs" style="left:248.4px;top:30.5px;width:7.2px;height:405px;background:rgba(255,255,255,.165)"></div><div class="abs" style="left:1px;top:618.4px;width:158.4px;height:7.2px;background:rgba(96,98,103,.72)"></div></div>
<div id="editor"><svg width="10.4" height="10.4" viewBox="0 0 11 11" style="position:absolute;left:8.3px;top:10.1px"><circle cx="5.5" cy="5.5" r="5" fill="#1A70C0"/><path d="M2 3.4L5.6 1.2L9.8 4.6L9 9L4.4 9.4Z" fill="#46B8F2"/><path d="M2.6 2.8L8.6 8.8" stroke="#A9E2FC" stroke-width="1.5"/><path d="M6.6 1.2A4.6 4.6 0 0 1 9.9 5.4L6.4 2.2Z" fill="#2C8FDD"/></svg><span class="abs tb" style="left:23px;top:7.7px;font-size:9.85px">home_page.dart</span><svg width="7" height="7" viewBox="0 0 7 7" style="position:absolute;left:101.6px;top:11.6px"><path d="M.8 .8L6.2 6.2M6.2 .8L.8 6.2" stroke="#868A91" stroke-width=".9"/></svg><div class="abs" style="left:0.00px;top:26.50px;width:116.70px;height:2px;background:#3574F0;"></div><div class="abs" style="left:0.00px;top:28.50px;width:116.70px;height:1px;background:#3574F0;opacity:0.60"></div><div class="abs" style="left:116.6px;top:28.2px;width:472px;height:1px;background:#2A2C2F"></div><svg width="3" height="12" viewBox="0 0 3 12" style="position:absolute;left:571.6px;top:9.6px"><rect x=".7" y=".9" width="1.6" height="1.6" rx=".55" fill="#CED0D6"/><rect x=".7" y="4.5" width="1.6" height="1.6" rx=".55" fill="#CED0D6"/><rect x=".7" y="8.1" width="1.6" height="1.6" rx=".55" fill="#CED0D6"/></svg><svg width="9" height="8" viewBox="0 0 9 8" style="position:absolute;left:517.8px;top:34px"><path d="M4.5 .5L8.6 7.5H.4Z" fill="#C9AE68"/><path d="M4.5 3V5.2" stroke="#1E1F22" stroke-width="1"/><circle cx="4.5" cy="6.4" r=".55" fill="#1E1F22"/></svg><span class="abs" style="left:528.2px;top:32.4px;font-size:8.6px;line-height:12px;color:#CED0D6">1</span><svg width="9" height="9" viewBox="0 0 9 9" style="position:absolute;left:538.8px;top:33.4px"><path d="M1 4.2L3.4 6.2L8 1.2" fill="none" stroke="#86B591" stroke-width="1.1"/><path d="M.6 8.2L1.8 7.5L3 8.2L4.2 7.5L5.4 8.2L6.6 7.5L7.8 8.2" fill="none" stroke="#5E9A6B" stroke-width=".7"/></svg><span class="abs" style="left:549px;top:32.4px;font-size:8.6px;line-height:12px;color:#CED0D6">2</span><svg width="8" height="5" viewBox="0 0 8 5" style="position:absolute;left:560.4px;top:35.6px"><path d="M1.4 3.8L4 1.4L6.6 3.8" fill="none" stroke="#B4B8BF" stroke-width="1" stroke-linecap="round" stroke-linejoin="round"/></svg><svg width="8" height="5" viewBox="0 0 8 5" style="position:absolute;left:575.2px;top:36.6px"><path d="M1.4 1.2L4 3.6L6.6 1.2" fill="none" stroke="#B4B8BF" stroke-width="1" stroke-linecap="round" stroke-linejoin="round"/></svg><div class="abs" style="left:0.00px;top:300.50px;width:588.00px;height:15px;background:#26282E;"></div><div class="abs" style="left:0.00px;top:299.50px;width:588.00px;height:1px;background:#26282E;opacity:0.30"></div><div class="abs" style="left:0.00px;top:315.50px;width:588.00px;height:1px;background:#26282E;opacity:0.70"></div><div class="abs" style="left:56.6px;top:28.5px;width:1px;height:598px;background:#2D2F33"></div><div class="abs" style="left:532.5px;top:28.5px;width:1px;height:598px;background:#292B2E"></div><div class="abs code" style="left:0;top:30.8px;width:23.5px"><div class="ln">1</div>
<div class="ln">2</div>
<div class="ln">3</div>
<div class="ln">4</div>
<div class="ln">5</div>
<div class="ln">6</div>
<div class="ln">7</div>
<div class="ln">8</div>
<div class="ln">9</div>
<div class="ln">10</div>
<div class="ln">11</div>
<div class="ln">12</div>
<div class="ln">13</div>
<div class="ln">14</div>
<div class="ln">15</div>
<div class="ln">16</div>
<div class="ln">17</div>
<div class="ln cur">18</div></div><div class="abs code" style="left:57.7px;top:30.8px"><div class="cl"><span class="k">import</span><span class="n"> </span><span class="s">'package:airbnb_</span><span class="sw">checkin</span><span class="s">/cubits/auth/auth_cubit.dart'</span><span class="n">;</span></div>
<div class="cl"><span class="k">import</span><span class="n"> </span><span class="s">'package:flutter/material.dart'</span><span class="n">;</span></div>
<div class="cl"><span class="k">import</span><span class="n"> </span><span class="s">'package:flutter_bloc/flutter_bloc.dart'</span><span class="n">;</span></div>
<div class="cl"> </div>
<div class="cl"><span class="k">class</span><span class="n"> HomePage </span><span class="k">extends</span><span class="n"> StatelessWidget {</span></div>
<div class="cl"><span class="n">  </span><span class="k">const</span><span class="n"> HomePage({</span><span class="k">super</span><span class="n">.key});</span></div>
<div class="cl"> </div>
<div class="cl"><span class="n">  </span><span class="a">@override</span></div>
<div class="cl"><span class="n">  Widget </span><span class="f">build</span><span class="n">(BuildContext context) =&gt; </span><span class="f">Scaffold</span><span class="n">(</span></div>
<div class="cl"><span class="n">        body: </span><span class="f">Center</span><span class="n">(</span></div>
<div class="cl"><span class="n">          child: </span><span class="f">ElevatedButton</span><span class="n">(</span></div>
<div class="cl"><span class="n">            onPressed: () =&gt; context.read&lt;AuthCubit&gt;().signOut(),</span></div>
<div class="cl"><span class="n">            child: </span><span class="fw">Text</span><span class="fw2">(</span><span class="sw2">'Esci'</span><span class="fw2">)</span><span class="n">,</span></div>
<div class="cl"><span class="n">          ),  </span><span class="c">// ElevatedButton</span></div>
<div class="cl"><span class="n">        ),  </span><span class="c">// Center</span></div>
<div class="cl"><span class="n">      );  </span><span class="c">// Scaffold</span></div>
<div class="cl"><span class="n">}</span></div>
<div class="cl"> </div></div><svg width="11" height="10" viewBox="0 0 11 10" style="position:absolute;left:25.2px;top:160.6px"><circle cx="4.6" cy="5.4" r="3.6" fill="none" stroke="#548AF7" stroke-width="1.2"/><circle cx="4.6" cy="5.4" r="1.5" fill="#548AF7"/><path d="M7.6 2.8L10 .6M10 .6H8.2M10 .6V2.4" stroke="#DB5C5C" stroke-width=".9" fill="none"/></svg><svg width="6" height="9" viewBox="0 0 6 9" style="position:absolute;left:133.4px;top:355.7px"><path d="M1.4 1.2H4.6L3.7 2.6V6.4L4.6 7.8H1.4L2.3 6.4V2.6Z" fill="#F2F2F2" stroke="#000" stroke-width="1.1" stroke-linejoin="round" paint-order="stroke"/></svg><div class="abs" style="left:69.6px;top:174.3px;width:1px;height:111.6px;background:#292B2F"></div><div class="abs" style="left:69.6px;top:126.4px;width:1px;height:15.9px;background:#292B2F"></div><div class="abs" style="left:105.2px;top:190.2px;width:1px;height:79.7px;background:#292B2F"></div><div class="abs" style="left:117.1px;top:206.1px;width:1px;height:47.8px;background:#292B2F"></div></div>
<div id="rpanel"><span class="abs hb" style="left:8.9px;top:8.8px;font-size:10.25px">Running Devices</span><svg width="10" height="12" viewBox="0 0 10 12" style="position:absolute;left:107.90px;top:9.10px"><path d="M6.6 4V2Q6.6 1 5.6 1H2.4Q1.4 1 1.4 2V9.6Q1.4 10.6 2.4 10.6H3.6" fill="none" stroke="#CED0D6" stroke-width="1.05"/><rect x="4.6" y="5" width="4.6" height="3.6" fill="none" stroke="#B58BE8" stroke-width="1"/><path d="M4 10.4H9.8" stroke="#CED0D6" stroke-width="1"/><circle cx="8.6" cy="10.4" r="1.3" fill="#5FAD65"/></svg><span class="abs tb" style="left:119px;top:8.6px;font-size:9.6px">Pixel 8 Pro API 35</span><svg width="6" height="6" viewBox="0 0 6 6" style="position:absolute;left:204.90px;top:12.30px"><path d="M.6 .6L5.4 5.4M5.4 .6L.6 5.4" stroke="#868A91" stroke-width=".9"/></svg><svg width="9" height="9" viewBox="0 0 9 9" style="position:absolute;left:215.20px;top:10.40px"><path d="M4.5 .4V8.6M.4 4.5H8.6" stroke="#CED0D6" stroke-width="1.05"/></svg><svg width="10" height="10" viewBox="0 0 10 10" style="position:absolute;left:242.10px;top:10.00px"><rect x=".8" y="1" width="8.4" height="8" rx="1" fill="none" stroke="#CED0D6" stroke-width="1.05"/><path d="M.8 3H9.2" stroke="#CED0D6" stroke-width="1.6"/></svg><svg width="3" height="12" viewBox="0 0 3 12" style="position:absolute;left:264.4000000000001px;top:9.700000000000003px"><rect x=".7" y=".9" width="1.6" height="1.6" rx=".55" fill="#CED0D6"/><rect x=".7" y="4.5" width="1.6" height="1.6" rx=".55" fill="#CED0D6"/><rect x=".7" y="8.1" width="1.6" height="1.6" rx=".55" fill="#CED0D6"/></svg><div class="abs" style="left:279.6px;top:14.6px;width:10px;height:1.1px;background:#CED0D6"></div><div class="abs" style="left:0;top:28.5px;width:300.5px;height:1px;background:#2F3135"></div><div class="abs" style="left:98.50px;top:27.50px;width:112.40px;height:1px;background:#6C7077;"></div><div class="abs" style="left:98.50px;top:26.50px;width:112.40px;height:1px;background:#6C7077;opacity:0.70"></div><div class="abs" style="left:98.50px;top:28.50px;width:112.40px;height:1px;background:#6C7077;opacity:0.60"></div><svg width="10" height="10" viewBox="0 0 11 11" style="position:absolute;left:9.30px;top:36.50px"><path d="M3.2 2.4A4.4 4.4 0 1 0 7.8 2.4" fill="none" stroke="#CED0D6" stroke-width="1.05" stroke-linecap="round"/><path d="M5.5 .8V5.4" stroke="#CED0D6" stroke-width="1.05" stroke-linecap="round"/></svg><svg width="11" height="9" viewBox="0 0 11 9" style="position:absolute;left:27.50px;top:37.00px"><path d="M1 3.2H2.8L5.2 1.2V7.8L2.8 5.8H1Z" fill="none" stroke="#CED0D6" stroke-width="1" stroke-linejoin="round"/><path d="M6.8 3Q7.8 4.5 6.8 6M8.4 1.8Q10.2 4.5 8.4 7.2" fill="none" stroke="#CED0D6" stroke-width="1" stroke-linecap="round"/></svg><svg width="9" height="9" viewBox="0 0 9 9" style="position:absolute;left:46.40px;top:37.00px"><path d="M1 3.2H2.8L5.2 1.2V7.8L2.8 5.8H1Z" fill="none" stroke="#CED0D6" stroke-width="1" stroke-linejoin="round"/><path d="M6.8 3Q7.8 4.5 6.8 6" fill="none" stroke="#CED0D6" stroke-width="1" stroke-linecap="round"/></svg><div class="abs" style="left:63.1px;top:34.4px;width:1px;height:13px;background:#36383C"></div><svg width="11" height="10" viewBox="0 0 11 10" style="position:absolute;left:70.20px;top:36.50px"><rect x=".8" y=".8" width="6" height="8.4" rx=".7" fill="#3A3D42" stroke="#CED0D6" stroke-width="1"/><path d="M3.8 2.2V7.8" stroke="#CED0D6" stroke-width="1"/><path d="M8.4 1.2Q10.6 5 8.4 8.8" fill="none" stroke="#4A78D0" stroke-width="1.1"/></svg><svg width="11" height="10" viewBox="0 0 11 10" style="position:absolute;left:89.20px;top:36.50px"><rect x="4.2" y=".8" width="6" height="8.4" rx=".7" fill="#3A3D42" stroke="#CED0D6" stroke-width="1"/><path d="M7.2 2.2V7.8" stroke="#CED0D6" stroke-width="1"/><path d="M2.6 1.2Q.4 5 2.6 8.8" fill="none" stroke="#548AF7" stroke-width="1.1"/><path d="M4.2 .8H2.2M4.2 9.2H2.2" stroke="#548AF7" stroke-width="1"/></svg><div class="abs" style="left:107.1px;top:34.4px;width:1px;height:13px;background:#36383C"></div><svg width="7" height="8" viewBox="0 0 7 8" style="position:absolute;left:115.20px;top:37.50px"><path d="M5.8 1L1.2 4L5.8 7Z" fill="none" stroke="#CED0D6" stroke-width="1" stroke-linejoin="round"/></svg><svg width="9" height="9" viewBox="0 0 9 9" style="position:absolute;left:133.20px;top:37.00px"><circle cx="4.5" cy="4.5" r="3.5" fill="none" stroke="#CED0D6" stroke-width="1"/></svg><svg width="8" height="8" viewBox="0 0 8 8" style="position:absolute;left:152.40px;top:37.50px"><rect x="1.4" y="1.4" width="5.2" height="5.2" rx=".8" fill="none" stroke="#CED0D6" stroke-width="1"/></svg><div class="abs" style="left:168.5px;top:34.4px;width:1px;height:13px;background:#36383C"></div><svg width="10" height="12" viewBox="0 0 10 12" style="position:absolute;left:176.70px;top:35.70px"><path d="M6.8 4.2V2Q6.8 1 5.8 1H2.2Q1.2 1 1.2 2V9.4Q1.2 10.4 2.2 10.4H4" fill="none" stroke="#CED0D6" stroke-width="1.05"/><circle cx="7" cy="8.4" r="1.6" fill="none" stroke="#CED0D6" stroke-width=".95"/><path d="M7 5.6V11.2M4.6 7L9.4 9.8M4.6 9.8L9.4 7" stroke="#CED0D6" stroke-width=".8"/></svg><div class="abs" style="left:192.1px;top:34.4px;width:1px;height:13px;background:#36383C"></div><svg width="12" height="10" viewBox="0 0 12 10" style="position:absolute;left:198.50px;top:36.50px"><path d="M1 3.4Q1 2.4 2 2.4H3.4L4.4 1H7.6L8.6 2.4H10Q11 2.4 11 3.4V8Q11 9 10 9H2Q1 9 1 8Z" fill="none" stroke="#CED0D6" stroke-width="1" stroke-linejoin="round"/><circle cx="6" cy="5.6" r="1.9" fill="none" stroke="#CED0D6" stroke-width="1"/></svg><svg width="12" height="9" viewBox="0 0 12 9" style="position:absolute;left:216.90px;top:37.00px"><rect x="1" y="1.2" width="7" height="6.6" rx="1" fill="none" stroke="#CED0D6" stroke-width="1"/><path d="M8 3.6L11 2V7L8 5.4" fill="none" stroke="#CED0D6" stroke-width="1" stroke-linejoin="round"/></svg><div class="abs" style="left:235.1px;top:34.4px;width:1px;height:13px;background:#36383C"></div><svg width="5" height="8" viewBox="0 0 5 8" style="position:absolute;left:257.80px;top:37.50px"><path d="M1 1L4 4L1 7" fill="none" stroke="#9DA0A8" stroke-width="1" stroke-linecap="round" stroke-linejoin="round"/></svg><svg width="12" height="11" viewBox="0 0 12 11" style="position:absolute;left:279.50px;top:36.20px"><path d="M10.4 4.4V2Q10.4 1 9.4 1H2Q1 1 1 2V7.2Q1 8.2 2 8.2H4.4" fill="none" stroke="#CED0D6" stroke-width="1"/><path d="M1 3H10.4" stroke="#CED0D6" stroke-width="1"/><circle cx="7.8" cy="7.2" r="1.9" fill="none" stroke="#CED0D6" stroke-width="1"/><path d="M9.2 8.6L11 10.4" stroke="#CED0D6" stroke-width="1.1"/></svg><div class="abs" style="left:281.5px;top:233.5px;width:3.2px;height:33.4px;background:linear-gradient(90deg,#8A8A8A,#C4C4C4 70%,#8A8A8A);border-radius:1.2px"></div><div class="abs" style="left:281.5px;top:298.8px;width:3.2px;height:73.4px;background:linear-gradient(90deg,#8A8A8A,#C4C4C4 70%,#8A8A8A);border-radius:1.2px"></div><div class="abs" style="left:14.10px;top:53.30px;width:269.40px;height:571.80px;border-radius:34px;background:linear-gradient(180deg,#C4C4C4 0,#ADADAD 6px,#848484 34px,#7C7C7C 50%,#767676 92%,#6A6A6A 100%)"></div><div class="abs" style="left:16.20px;top:54.90px;width:265.20px;height:568.70px;border-radius:32px;background:linear-gradient(180deg,#3C3C3C 0,#4A4A4A 30px,#4A4A4A 95%,#333 100%)"></div><div class="abs" style="left:18.40px;top:57.70px;width:260.80px;height:564.40px;border-radius:30px;background:linear-gradient(180deg,#5A5A5A 0,#454545 3px,#808080 34px,#929292 60px,#929292 90%,#3A3A3A 97%,#2A2A2A 100%)"></div><div class="abs" style="left:21.30px;top:58.90px;width:255.00px;height:562.00px;border-radius:27px;background:#000"></div><div class="abs" style="left:25.6px;top:63.9px;width:246.9px;height:537.5px;border-radius:21px 21px 3px 3px;background:#fff;overflow:hidden"><div class="abs" style="left:0;top:0;width:100%;height:27.4px;background:#BFBFBF"></div><span class="abs" style="left:15.2px;top:9.2px;font-size:7.9px;line-height:10px;color:#fff">4:06</span><div class="abs" style="left:116.4px;top:6.8px;width:14px;height:14px;border-radius:50%;background:radial-gradient(circle at 55% 45%,#3a3a3a 0,#1a1a1a 25%,#000 55%)"></div><svg width="9" height="7" viewBox="0 0 9 7" style="position:absolute;left:207.6px;top:10.6px"><path d="M4.5 6.6L.2 1.6Q2 .2 4.5 .2Q7 .2 8.8 1.6Z" fill="#fff"/></svg><svg width="6" height="7" viewBox="0 0 6 7" style="position:absolute;left:217.4px;top:10.6px"><path d="M5.6 .4V6.4H.2Z" fill="#fff"/></svg><svg width="4" height="8" viewBox="0 0 4 8" style="position:absolute;left:227.2px;top:9.8px"><path d="M1.2 .2H2.8V1H3.4Q3.8 1 3.8 1.4V7.4Q3.8 7.8 3.4 7.8H.6Q.2 7.8 .2 7.4V1.4Q.2 1 .6 1H1.2Z" fill="#fff"/></svg><div class="abs" style="left:106.4px;top:255.8px;width:35px;height:26.2px;border-radius:5.4px;background:#DD4560;box-shadow:0 .6px 1.4px rgba(0,0,0,.28);color:#fff;font-size:6.8px;font-weight:bold;line-height:26.6px;text-align:center">Esci</div></div><div class="abs" style="left:118.9px;top:607.3px;width:60px;height:2px;border-radius:1px;background:#fff"></div><div class="abs" style="left:268.5px;top:532.9px;width:19.4px;height:76.6px;border-radius:2.6px;background:#2B2D30;border:1px solid #1E1F22"></div><svg width="9" height="9" viewBox="0 0 9 9" style="position:absolute;left:273.60px;top:538.60px"><path d="M4.5 .2V8.8M.2 4.5H8.8" stroke="#CED0D6" stroke-width="1"/></svg><div class="abs" style="left:273.7px;top:561.9px;width:8.8px;height:1px;background:#5A5D63"></div><span class="abs" style="left:273.1px;top:576.9px;font-size:7.2px;line-height:10px;font-weight:bold;color:#DFE1E5;letter-spacing:-.3px">1:1</span><svg width="10" height="9" viewBox="0 0 10 9" style="position:absolute;left:273.10px;top:596.00px"><rect x=".8" y=".8" width="8.4" height="7.4" rx="1" fill="none" stroke="#5A5D63" stroke-width="1"/><path d="M3 6L6.6 3M6.6 3H4.8M6.6 3V4.8" stroke="#5A5D63" stroke-width=".8" fill="none"/></svg></div>
<div id="rstrip"><svg width="13.8" height="16.1" viewBox="0 0 12 14" style="position:absolute;left:6.70px;top:6.05px"><path d="M6 1.4Q2.6 1.4 2.6 5.2V8L1.2 10H10.8L9.4 8V5.2Q9.4 1.4 6 1.4Z" fill="none" stroke="#CED0D6" stroke-width="1.05" stroke-linejoin="round"/><path d="M4.8 11.8Q6 13 7.2 11.8" fill="none" stroke="#CED0D6" stroke-width="1"/><circle cx="10" cy="2.3" r="2.3" fill="#548AF7"/></svg><svg width="13" height="13" viewBox="0 0 13 13" style="position:absolute;left:7.70px;top:35.80px"><path d="M7.8 5V2.2Q7.8 1 6.6 1H2.4Q1.2 1 1.2 2.2V10.6Q1.2 11.8 2.4 11.8H4" fill="none" stroke="#CED0D6" stroke-width="1.1"/><path d="M5.6 11.8H12.4Q12.4 9 10.6 8.4L9 7.8L7.4 8.4Q5.6 9 5.6 11.8Z" fill="#CED0D6"/><path d="M7.2 7L6.4 5.8M10.8 7L11.6 5.8" stroke="#CED0D6" stroke-width=".8"/></svg><div class="abs" style="left:3.6px;top:59.9px;width:21.6px;height:21.4px;border-radius:4.4px;background:#45474C"></div><svg width="13" height="13" viewBox="0 0 13 13" style="position:absolute;left:7.90px;top:64.40px"><path d="M7.6 4V2.2Q7.6 1 6.4 1H2.6Q1.4 1 1.4 2.2V10.4Q1.4 11.6 2.6 11.6H3.8" fill="none" stroke="#CED0D6" stroke-width="1.1"/><rect x="5.4" y="6" width="5.4" height="3.6" fill="none" stroke="#CED0D6" stroke-width="1"/><path d="M4.6 11.4H11.6" stroke="#CED0D6" stroke-width="1"/><circle cx="10" cy="2.6" r="2.2" fill="#5FAD65"/></svg><svg width="13.4" height="13.4" viewBox="0 0 12 12" style="position:absolute;left:7.20px;top:91.80px"><path d="M6 .4Q6.7 5.3 11.6 6Q6.7 6.7 6 11.6Q5.3 6.7 .4 6Q5.3 5.3 6 .4Z" fill="#CED0D6"/></svg><svg width="14" height="13" viewBox="0 0 14 13" style="position:absolute;left:6.60px;top:120.20px"><circle cx="3" cy="2.8" r="1.7" fill="none" stroke="#CED0D6" stroke-width="1"/><path d="M4.2 4L9.6 9.4M11.4 1L2.4 10Q1.6 10.8 2.2 11.4Q2.8 12 3.6 11.2L12.2 2.4" fill="none" stroke="#CED0D6" stroke-width="1.05"/><path d="M13 8.6L11 10.4L13 12.2" fill="none" stroke="#47C5FB" stroke-width=".9"/></svg><svg width="14" height="13" viewBox="0 0 14 13" style="position:absolute;left:6.60px;top:148.10px"><path d="M12 6V2.4Q12 1.4 11 1.4H10L9.2 .6L8.4 1.4H6.8L6 .6L5.2 1.4H3.6L2.8 .6L2 1.4Q1 1.4 1 2.4V9.6Q1 10.6 2 10.6H8.6" fill="none" stroke="#CED0D6" stroke-width="1"/><path d="M2 9.4L5 5.6L7.2 8.2" fill="none" stroke="#CED0D6" stroke-width="1"/><circle cx="8.6" cy="4.4" r=".9" fill="#CED0D6"/><path d="M13.2 8.6L11.2 10.4L13.2 12.2" fill="none" stroke="#47C5FB" stroke-width=".9"/></svg><svg width="14" height="10" viewBox="0 0 14 10" style="position:absolute;left:6.80px;top:177.90px"><rect x="1" y="1.6" width="11" height="5.4" rx="2.7" fill="none" stroke="#CED0D6" stroke-width="1.05"/><path d="M4.2 4.3H8.8" stroke="#CED0D6" stroke-width="1.05"/><path d="M13.2 6.4L11.2 8.2L13.2 10" fill="none" stroke="#47C5FB" stroke-width=".9"/></svg><svg width="14" height="13" viewBox="0 0 14 13" style="position:absolute;left:6.80px;top:204.30px"><path d="M1 3.8V2Q1 1 2 1H3.8M9.2 1H11Q12 1 12 2V3.8M1 8.2V10Q1 11 2 11H3.8M12 8.2" fill="none" stroke="#CED0D6" stroke-width="1.05"/><circle cx="6.2" cy="5.6" r="2.1" fill="none" stroke="#CED0D6" stroke-width="1"/><path d="M7.8 7.2L9.4 8.8" stroke="#CED0D6" stroke-width="1"/><path d="M13.2 9L11.2 10.8L13.2 12.6" fill="none" stroke="#47C5FB" stroke-width=".9"/></svg><svg width="14.4" height="14.4" viewBox="0 0 12 12" style="position:absolute;left:6.00px;top:232.70px"><path d="M7 1H9.6L3.3 7.3L2 6Z M7 6.2H9.6L7.3 8.5L9.6 10.8H7L4.7 8.5Z" fill="#1F3A4D" stroke="#7CC4EA" stroke-width=".85" stroke-linejoin="round"/></svg><svg width="14.4" height="14.4" viewBox="0 0 12 12" style="position:absolute;left:6.00px;top:260.50px"><path d="M7 1H9.6L3.3 7.3L2 6Z M7 6.2H9.6L7.3 8.5L9.6 10.8H7L4.7 8.5Z" fill="#1F3A4D" stroke="#7CC4EA" stroke-width=".85" stroke-linejoin="round"/></svg></div>
<div id="status"><svg width="7" height="7" viewBox="0 0 7 7" style="position:absolute;left:9.6px;top:6.1px"><rect x=".8" y=".8" width="5.2" height="5.2" rx="1.2" fill="#25324D" stroke="#548AF7" stroke-width="1.1"/></svg><span class="abs" style="left:18.7px;top:3px;font-size:9.9px;line-height:13px;color:#A8ADB5;white-space:pre">airbnb_checkin</span><svg width="5" height="7" viewBox="0 0 5 7" style="position:absolute;left:91.6px;top:5.9px"><path d="M1 .8L3.8 3.5L1 6.2" fill="none" stroke="#868A91" stroke-width="1" stroke-linecap="round" stroke-linejoin="round"/></svg><span class="abs" style="left:102.6px;top:3px;font-size:9.8px;line-height:13px;color:#A8ADB5;white-space:pre">lib</span><svg width="5" height="7" viewBox="0 0 5 7" style="position:absolute;left:118.6px;top:5.9px"><path d="M1 .8L3.8 3.5L1 6.2" fill="none" stroke="#868A91" stroke-width="1" stroke-linecap="round" stroke-linejoin="round"/></svg><span class="abs" style="left:129.8px;top:3px;font-size:9.8px;line-height:13px;color:#A8ADB5;white-space:pre">pages</span><svg width="5" height="7" viewBox="0 0 5 7" style="position:absolute;left:162.2px;top:5.9px"><path d="M1 .8L3.8 3.5L1 6.2" fill="none" stroke="#868A91" stroke-width="1" stroke-linecap="round" stroke-linejoin="round"/></svg><span class="abs" style="left:173.8px;top:3px;font-size:9.8px;line-height:13px;color:#A8ADB5;white-space:pre">home</span><svg width="5" height="7" viewBox="0 0 5 7" style="position:absolute;left:204.2px;top:5.9px"><path d="M1 .8L3.8 3.5L1 6.2" fill="none" stroke="#868A91" stroke-width="1" stroke-linecap="round" stroke-linejoin="round"/></svg><svg width="10" height="10" viewBox="0 0 11 11" style="position:absolute;left:215.6px;top:4.2px"><circle cx="5.5" cy="5.5" r="5" fill="#1A70C0"/><path d="M2 3.4L5.6 1.2L9.8 4.6L9 9L4.4 9.4Z" fill="#46B8F2"/><path d="M2.6 2.8L8.6 8.8" stroke="#A9E2FC" stroke-width="1.5"/><path d="M6.6 1.2A4.6 4.6 0 0 1 9.9 5.4L6.4 2.2Z" fill="#2C8FDD"/></svg><span class="abs" style="left:229.4px;top:3px;font-size:9.75px;line-height:13px;color:#A8ADB5;white-space:pre">home_page.dart</span><span class="abs" style="left:1012px;top:3px;font-size:9.4px;line-height:13px;color:#A8ADB5;white-space:pre">18:1</span><span class="abs" style="left:1040.4px;top:3px;font-size:9.4px;line-height:13px;color:#A8ADB5;white-space:pre">LF</span><span class="abs" style="left:1062.2px;top:3px;font-size:9.9px;line-height:13px;color:#A8ADB5;white-space:pre">UTF-8</span><svg width="11" height="10" viewBox="0 0 11 10" style="position:absolute;left:1102.4px;top:4.8px"><path d="M1 1.6Q1 .8 1.8 .8H9.2Q10 .8 10 1.6V6.6Q10 7.4 9.2 7.4H4.2L2.2 9.2V7.4H1.8Q1 7.4 1 6.6Z" fill="none" stroke="#A8ADB5" stroke-width="1"/><path d="M5.5 2.4V4.4" stroke="#A8ADB5" stroke-width="1"/><circle cx="5.5" cy="5.8" r=".5" fill="#A8ADB5"/></svg><span class="abs" style="left:1125.2px;top:3px;font-size:9.7px;line-height:13px;color:#A8ADB5;white-space:pre">2 spaces</span><svg width="11" height="11" viewBox="0 0 11 11" style="position:absolute;left:1177.6px;top:3.6px"><rect x="1.2" y="4.8" width="7.2" height="5.2" rx="1" fill="none" stroke="#A8ADB5" stroke-width="1"/><path d="M5.6 4.8V3Q5.6 1 7.6 1Q9.6 1 9.6 3V3.6" fill="none" stroke="#A8ADB5" stroke-width="1"/><circle cx="4.8" cy="7.4" r=".7" fill="#A8ADB5"/></svg></div>
</div>
</body></html>
